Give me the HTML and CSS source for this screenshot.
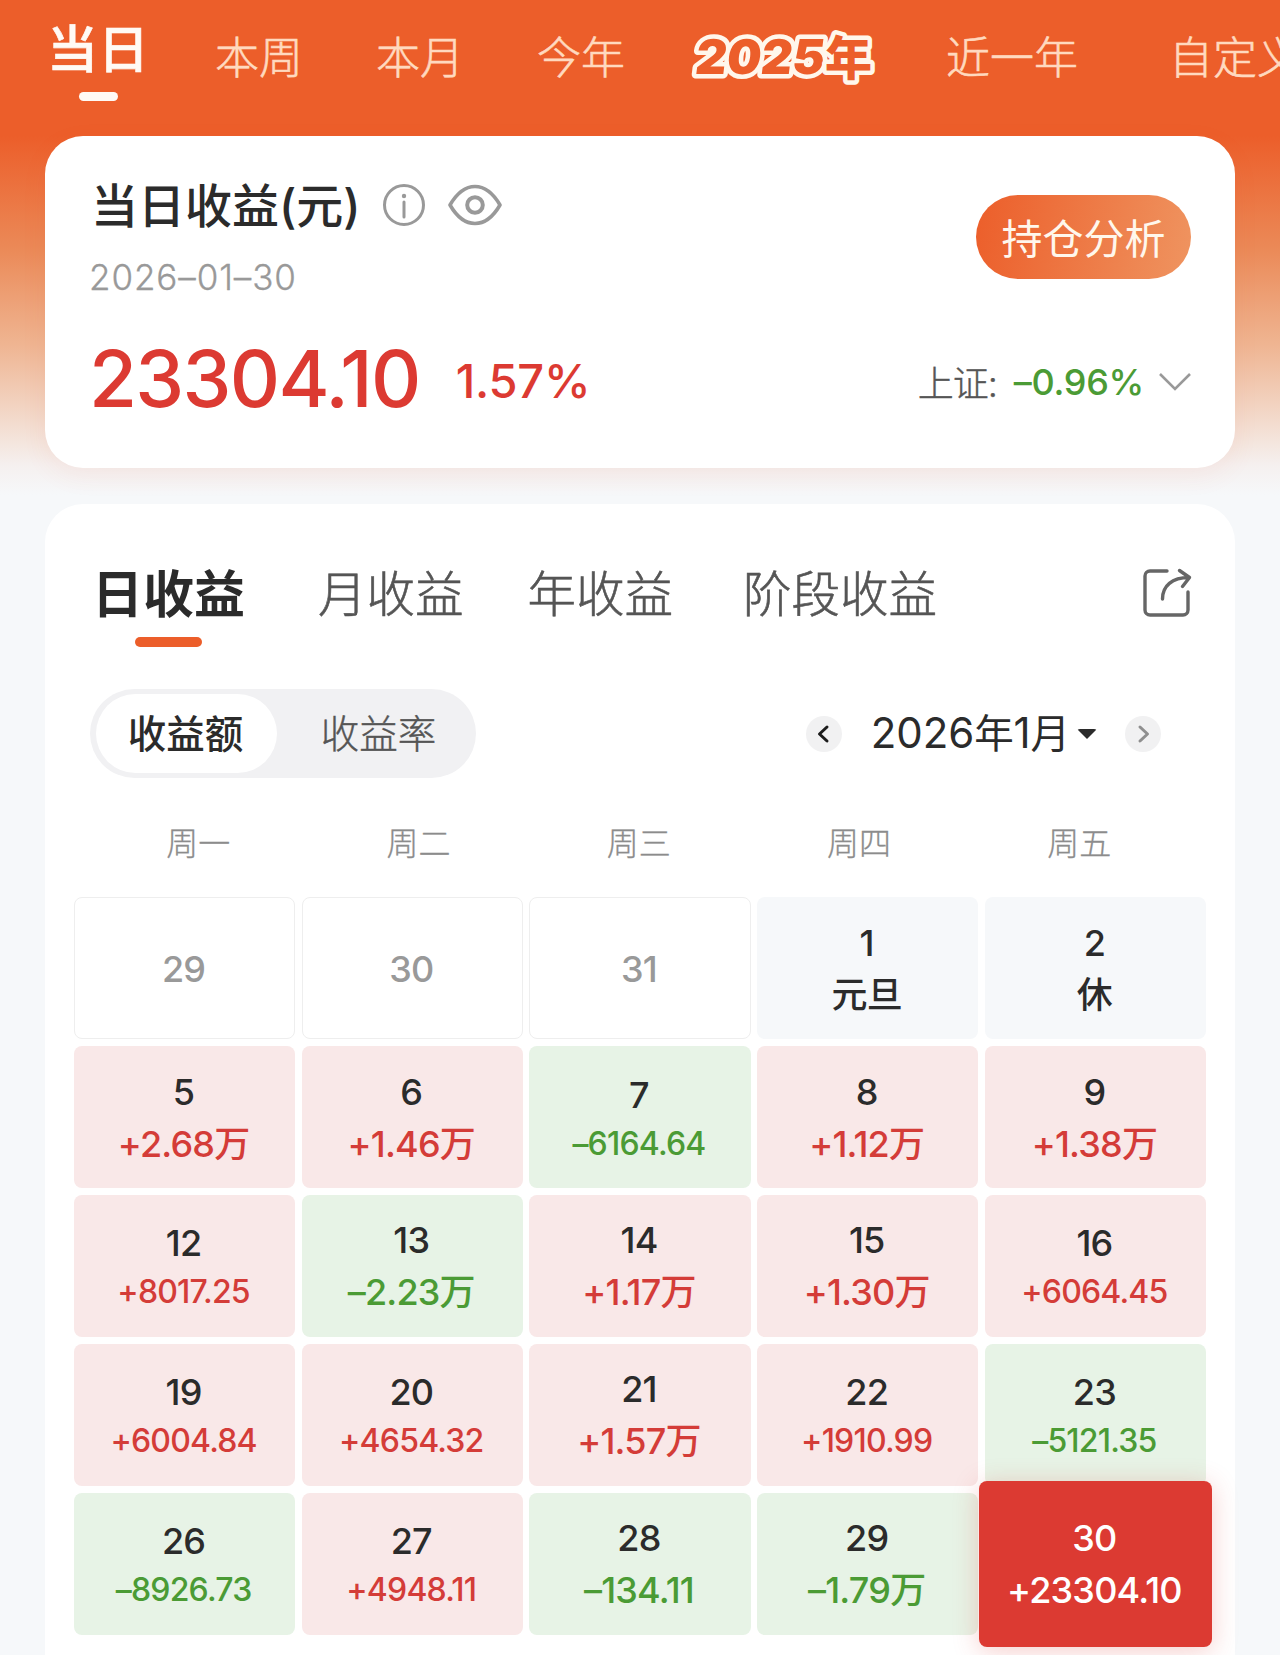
FILE: index.html
```
<!DOCTYPE html>
<html lang="zh-CN">
<head>
    <meta charset="UTF-8">
    <title>当日收益</title>
    <link rel="stylesheet" href="styles.css">
</head>
<body>
    <nav class="range-tabs">
        <a class="range active">当日</a>
        <a class="range">本周</a>
        <a class="range">本月</a>
        <a class="range">今年</a>
        <a class="range year">
            <svg width="190" height="64" viewBox="0 0 190 64">
                <text class="digits" x="3" y="49" textLength="129" lengthAdjust="spacingAndGlyphs" transform="translate(6 0) skewX(-7)">2025</text>
                <text x="134" y="50">年</text>
            </svg>
        </a>
        <a class="range">近一年</a>
        <a class="range custom">自定义</a>
    </nav>

    <section class="card summary">
        <div class="summary-top">
            <div>
                <h1>
                    <span class="title">当日收益(元)</span>
                    <svg class="icon-info" width="44" height="44" viewBox="0 0 44 44" fill="none" stroke="#999" stroke-width="3">
                        <circle cx="22" cy="22" r="19.5"/>
                        <path d="M22 19v15" stroke-linecap="round"/>
                        <circle cx="22" cy="13" r="2.2" fill="#999" stroke="none"/>
                    </svg>
                    <svg class="icon-eye" width="54" height="42" viewBox="0 0 54 42" fill="none" stroke="#999" stroke-width="3.6" stroke-linejoin="round">
                        <path d="M2 21C9 9 17 2.500 27 2.500S45 9 52 21C45 33 37 39.500 27 39.500S9 33 2 21Z"/>
                        <circle cx="27" cy="21" r="7.800" stroke-width="4"/>
                    </svg>
                </h1>
                <p class="date">2026–01–30</p>
            </div>
            <button type="button" class="analyse">持仓分析</button>
        </div>
        <div class="summary-bottom">
            <span class="amount">23304.10</span>
            <span class="percent">1.57%</span>
            <span class="index-name">上证:</span>
            <span class="index-value">–0.96%</span>
            <svg class="icon-down" width="32" height="20" viewBox="0 0 32 20" fill="none" stroke="#999" stroke-width="2.6">
                <path d="M1 2 16 17 31 2"/>
            </svg>
        </div>
    </section>

    <section class="card detail">
        <div class="detail-tabs">
            <a class="tab active">日收益</a>
            <a class="tab">月收益</a>
            <a class="tab">年收益</a>
            <a class="tab stage">阶段收益</a>
            <svg class="icon-share" width="50" height="50" viewBox="0 0 50 50" fill="none" stroke="#666" stroke-width="3.400" stroke-linecap="round" stroke-linejoin="round">
                <path d="M25 3H8a5 5 0 0 0-5 5v34a5 5 0 0 0 5 5h33a5 5 0 0 0 5-5V24"/>
                <path d="M20.500 31C20.500 18 30 9.500 47 9.500M37.500 2.500 47.500 9.500 40.500 18.500"/>
            </svg>
        </div>

        <div class="toolbar">
            <div class="switch">
                <span class="option on">收益额</span>
                <span class="option">收益率</span>
            </div>
            <div class="month">
                <span class="arrow">
                    <svg width="36" height="36" viewBox="0 0 36 36" fill="none" stroke="#1c1c1c" stroke-width="3" stroke-linecap="round" stroke-linejoin="round"><path d="M21 11 13.500 18 21 25"/></svg>
                </span>
                <span class="month-name">2026<i>年</i>1<i>月</i></span>
                <span class="caret"></span>
                <span class="arrow">
                    <svg width="36" height="36" viewBox="0 0 36 36" fill="none" stroke="#8f8f8f" stroke-width="3" stroke-linecap="round" stroke-linejoin="round"><path d="M15 11 22.500 18 15 25"/></svg>
                </span>
            </div>
        </div>

        <div class="weekdays">
            <span>周一</span>
            <span>周二</span>
            <span>周三</span>
            <span>周四</span>
            <span>周五</span>
        </div>

        <div class="calendar">
            <div class="day other"><b>29</b></div>
            <div class="day other"><b>30</b></div>
            <div class="day other"><b>31</b></div>
            <div class="day rest"><b>1</b><em>元旦</em></div>
            <div class="day rest"><b>2</b><em>休</em></div>

            <div class="day up"><b>5</b><em>+2.68万</em></div>
            <div class="day up"><b>6</b><em>+1.46万</em></div>
            <div class="day down"><b>7</b><em class="small">–6164.64</em></div>
            <div class="day up"><b>8</b><em>+1.12万</em></div>
            <div class="day up"><b>9</b><em>+1.38万</em></div>

            <div class="day up"><b>12</b><em class="small">+8017.25</em></div>
            <div class="day down"><b>13</b><em>–2.23万</em></div>
            <div class="day up"><b>14</b><em>+1.17万</em></div>
            <div class="day up"><b>15</b><em>+1.30万</em></div>
            <div class="day up"><b>16</b><em class="small">+6064.45</em></div>

            <div class="day up"><b>19</b><em class="small">+6004.84</em></div>
            <div class="day up"><b>20</b><em class="small">+4654.32</em></div>
            <div class="day up"><b>21</b><em>+1.57万</em></div>
            <div class="day up"><b>22</b><em class="small">+1910.99</em></div>
            <div class="day down"><b>23</b><em class="small">–5121.35</em></div>

            <div class="day down"><b>26</b><em class="small">–8926.73</em></div>
            <div class="day up"><b>27</b><em class="small">+4948.11</em></div>
            <div class="day down"><b>28</b><em>–134.11</em></div>
            <div class="day down"><b>29</b><em>–1.79万</em></div>
            <div class="day selected"><b>30</b><em>+23304.10</em></div>
        </div>
    </section>
</body>
</html>
```
FILE: styles.css
```
* {
    box-sizing: border-box;
}

body {
    margin: 0;
    height: 1655px;
    overflow: hidden;
    font-family: Inter, "Noto Sans CJK SC", sans-serif;
    color: #2b2b2b;
    background: #f6f8fa linear-gradient(#ec5e2a 0, #ec5e2a 136px, #eb8a58 250px, #efb592 345px, #f3ddd0 425px, #f5f0ef 465px, #f6f8fa 495px) no-repeat 0 0 / 100% 495px;
}

h1, p {
    margin: 0;
}

b, em, i {
    font-style: normal;
    font-weight: inherit;
}

svg {
    display: block;
    flex: none;
}

/* top tabs */
.range-tabs {
    display: flex;
    height: 136px;
    padding-left: 47px;
    white-space: nowrap;
}

.range {
    flex: none;
    margin: 26px 73px 0 0;
    font-size: 44px;
    line-height: 64px;
    font-weight: 300;
    color: #ffd9bf;
    -webkit-text-stroke: 0.6px;
}

.range.active {
    display: flex;
    flex-direction: column;
    align-items: center;
    margin: 18px 66px 0 0;
    font-size: 51px;
    font-weight: 500;
    color: #fffaf5;
}

.range.active::after {
    content: "";
    width: 39px;
    height: 9px;
    margin-top: 10px;
    border-radius: 5px;
    background: #fffaf5;
}

.range.year {
    width: 190px;
    margin: 25px 65px 0 -7px;
}

.year svg {
    overflow: visible;
}

.year text {
    font: 900 47px "Noto Sans CJK SC", sans-serif;
    fill: #ec5e2a;
    stroke: #fff7ec;
    stroke-width: 9px;
    stroke-linejoin: round;
    paint-order: stroke;
}

.year .digits {
    font: 900 48px Inter, sans-serif;
}

.range.custom {
    margin-left: 18px;
}

/* cards */
.card {
    margin: 0 45px;
    background: #fff;
    border-radius: 38px;
}

.summary {
    height: 332px;
    padding: 40px 44px 0 46px;
    box-shadow: 0 8px 26px rgba(225, 90, 50, 0.07);
}

.summary-top {
    display: flex;
    justify-content: space-between;
    height: 130px;
}

h1 {
    display: flex;
    align-items: center;
    height: 58px;
    font-size: 47px;
    font-weight: 500;
}

.title {
    width: 269px;
    margin-top: -5px;
    white-space: nowrap;
}

.icon-info {
    margin-left: 22px;
}

.icon-eye {
    margin-left: 22px;
}

.date {
    margin: 17px 0 0 -2px;
    font-size: 35px;
    line-height: 52px;
    letter-spacing: 0.9px;
    color: #999;
    font-weight: 300;
    -webkit-text-stroke: 0.3px;
}

.analyse {
    width: 215px;
    height: 84px;
    margin: 19px 0 0;
    padding: 3px 0 0;
    border: none;
    border-radius: 42px;
    background: linear-gradient(100deg, #ec5e2a, #ef9460);
    font: 400 41px/80px Inter, "Noto Sans CJK SC", sans-serif;
    color: #fff7ec;
}

.summary-bottom {
    display: flex;
    align-items: center;
    height: 148px;
    white-space: nowrap;
}

.amount {
    margin: -4px 0 0 -2px;
    font-size: 78px;
    font-weight: 500;
    letter-spacing: -1.7px;
    color: #dc3a32;
}

.percent {
    margin: 1px 0 0 36px;
    font-size: 47px;
    font-weight: 500;
    letter-spacing: -0.2px;
    color: #dc3a32;
}

.index-name {
    margin: 2px 0 0 auto;
    font-size: 36px;
    font-weight: 300;
    letter-spacing: -1px;
    color: #555;
    -webkit-text-stroke: 0.4px;
}

.index-value {
    margin: 4px 15px 0 17px;
    font-size: 36px;
    font-weight: 500;
    letter-spacing: -0.3px;
    color: #4b9b35;
}

.icon-down {
    margin-top: 3px;
}

.detail {
    height: 1200px;
    margin-top: 36px;
    padding: 54px 29px 0;
}

.detail-tabs {
    display: flex;
    padding: 0 14px 0 18px;
    height: 131px;
    white-space: nowrap;
}

.tab {
    margin: 2px 64px 0 0;
    font-size: 48.5px;
    line-height: 70px;
    font-weight: 300;
    color: #555;
    -webkit-text-stroke: 0.6px;
}

.tab.active {
    display: flex;
    flex-direction: column;
    align-items: center;
    margin-right: 73px;
    font-size: 51px;
    font-weight: 700;
    color: #2b2b2b;
    -webkit-text-stroke: 0;
}

.tab.active::after {
    content: "";
    width: 67px;
    height: 10px;
    margin-top: 7px;
    border-radius: 5px;
    background: #ec5e2a;
}

.tab.stage {
    margin-left: 6px;
}

.icon-share {
    margin: 10px 0 0 auto;
}

.toolbar {
    display: flex;
    justify-content: space-between;
    align-items: center;
    height: 89px;
    padding: 0 45px 0 16px;
}

.switch {
    display: flex;
    width: 386px;
    height: 89px;
    padding: 5px 6px;
    border-radius: 45px;
    background: #f1f1f3;
}

.option {
    flex: none;
    width: 181px;
    height: 79px;
    border-radius: 40px;
    text-align: center;
    font-size: 38.5px;
    line-height: 81px;
    font-weight: 300;
    color: #555;
    -webkit-text-stroke: 0.4px;
}

.option + .option {
    width: 203px;
}

.option.on {
    padding-right: 2px;
    background: #fff;
    font-weight: 500;
    color: #2b2b2b;
    -webkit-text-stroke: 0;
}

.month {
    display: flex;
    align-items: center;
}

.arrow {
    width: 36px;
    height: 36px;
    border-radius: 50%;
    background: #f1f1f2;
}

.month-name {
    margin-left: 29px;
    font-size: 42px;
    line-height: 60px;
    letter-spacing: -0.1px;
}

.month-name i {
    font-size: 39.5px;
}

.caret {
    margin: 0 28px 0 7px;
    border: 10px solid transparent;
    border-top: 10px solid #2b2b2b;
    border-bottom: none;
    border-radius: 3px;
}

.weekdays {
    display: grid;
    grid-template-columns: repeat(5, 220.3px);
    margin: 43px 0 0 14px;
    text-align: center;
    font-size: 32px;
    line-height: 46px;
    font-weight: 300;
    color: #8c8c8c;
    -webkit-text-stroke: 0.3px;
}

.calendar {
    display: grid;
    grid-template-columns: repeat(5, 1fr);
    grid-auto-rows: 142.4px;
    gap: 6.5px;
    margin-top: 30px;
}

.day {
    display: flex;
    flex-direction: column;
    align-items: center;
    justify-content: center;
    padding: 1px 2px 0 0;
    border-radius: 8px;
    font-size: 36px;
    line-height: 52px;
    font-weight: 500;
    letter-spacing: -0.8px;
    white-space: nowrap;
}

.day .small {
    font-size: 32px;
    line-height: 46px;
}

.other {
    border: 1px solid #eee;
    color: #999;
}

.rest {
    padding-top: 2px;
    background: #f6f8fa;
}

.up {
    background: #f9e8e8;
}

.down {
    background: #e7f3e6;
}

.up em {
    color: #d43c38;
}

.down em {
    color: #4b9b35;
}

.selected {
    margin: -12px -6px;
    background: #dc3a32;
    color: #fff;
    box-shadow: 0 4px 26px rgba(220, 58, 50, 0.25);
}
```
